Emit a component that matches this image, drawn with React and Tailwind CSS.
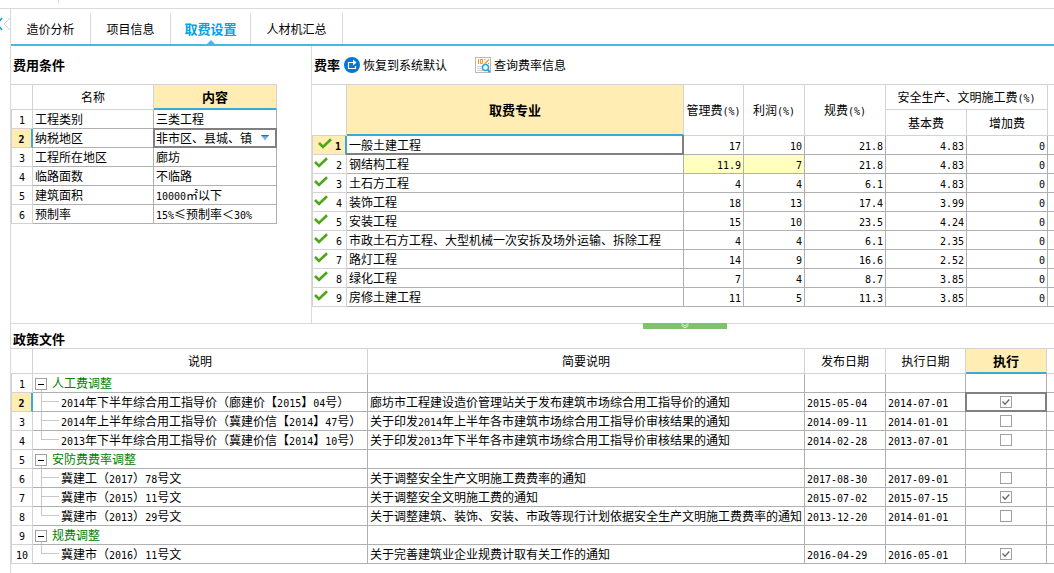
import { Fragment, useState } from 'react';
import clsx from 'clsx';

const tabs = ['造价分析', '项目信息', '取费设置', '人材机汇总'];

const conditions = [
  { name: '工程类别', value: '三类工程' },
  {
    name: '纳税地区',
    value: '非市区、县城、镇',
    options: ['市区', '县城、镇', '非市区、县城、镇'],
  },
  { name: '工程所在地区', value: '廊坊' },
  { name: '临路面数', value: '不临路' },
  { name: '建筑面积', value: '10000㎡以下' },
  { name: '预制率', value: '15%≤预制率＜30%' },
];

const rates = [
  { name: '一般土建工程', values: ['17', '10', '21.8', '4.83', '0'] },
  { name: '钢结构工程', values: ['11.9', '7', '21.8', '4.83', '0'], edited: true },
  { name: '土石方工程', values: ['4', '4', '6.1', '4.83', '0'] },
  { name: '装饰工程', values: ['18', '13', '17.4', '3.99', '0'] },
  { name: '安装工程', values: ['15', '10', '23.5', '4.24', '0'] },
  {
    name: '市政土石方工程、大型机械一次安拆及场外运输、拆除工程',
    values: ['4', '4', '6.1', '2.35', '0'],
  },
  { name: '路灯工程', values: ['14', '9', '16.6', '2.52', '0'] },
  { name: '绿化工程', values: ['7', '4', '8.7', '3.85', '0'] },
  { name: '房修土建工程', values: ['11', '5', '11.3', '3.85', '0'] },
];

const policies = [
  { group: '人工费调整' },
  {
    name: '2014年下半年综合用工指导价（廊建价【2015】04号）',
    desc: '廊坊市工程建设造价管理站关于发布建筑市场综合用工指导价的通知',
    issued: '2015-05-04',
    effective: '2014-07-01',
    applied: true,
  },
  {
    name: '2014年上半年综合用工指导价（冀建价信【2014】47号）',
    desc: '关于印发2014年上半年各市建筑市场综合用工指导价审核结果的通知',
    issued: '2014-09-11',
    effective: '2014-01-01',
  },
  {
    name: '2013年下半年综合用工指导价（冀建价信【2014】10号）',
    desc: '关于印发2013年下半年各市建筑市场综合用工指导价审核结果的通知',
    issued: '2014-02-28',
    effective: '2013-07-01',
    last: true,
  },
  { group: '安防费费率调整' },
  {
    name: '冀建工（2017）78号文',
    desc: '关于调整安全生产文明施工费费率的通知',
    issued: '2017-08-30',
    effective: '2017-09-01',
  },
  {
    name: '冀建市（2015）11号文',
    desc: '关于调整安全文明施工费的通知',
    issued: '2015-07-02',
    effective: '2015-07-15',
    applied: true,
  },
  {
    name: '冀建市（2013）29号文',
    desc: '关于调整建筑、装饰、安装、市政等现行计划依据安全生产文明施工费费率的通知',
    issued: '2013-12-20',
    effective: '2014-01-01',
    last: true,
  },
  { group: '规费调整' },
  {
    name: '冀建市（2016）11号文',
    desc: '关于完善建筑业企业规费计取有关工作的通知',
    issued: '2016-04-29',
    effective: '2016-05-01',
    applied: true,
    last: true,
  },
];

const headCell = 'h-[26px] border-t border-r border-b border-[#d3d3d3] p-0 font-normal';
const headSub = 'h-[26px] border-r border-b border-[#d3d3d3] p-0 font-normal';
const headActive =
  'h-[26px] border-t border-r border-b-2 border-[#d3d3d3] border-b-[#3ba9d6] bg-[#ffedb4] p-0 text-[13px] font-bold';
const cell = 'h-[19px] border-r border-b border-[#b0b0b0] px-0.5 py-0 whitespace-nowrap';
const tableBase = 'table-fixed border-separate border-spacing-0 leading-[18px]';

// half-width characters are set in a mono face so that two take one CJK cell
function Txt({ children }) {
  return children.split(/([\x20-\x7e]+)/).map((part, i) =>
    i % 2 ? (
      <span key={i} className="font-['DejaVu_Sans_Mono',monospace] text-[10px] leading-none">
        {part}
      </span>
    ) : (
      <Fragment key={i}>{part}</Fragment>
    )
  );
}

function IndexCell({ n, active, checked }) {
  return (
    <td
      className={clsx(
        'h-[19px] border-b border-l border-[#d3d3d3] p-0 text-center',
        active ? 'border-r-2 border-r-[#3ba9d6] bg-[#ffedb4] font-bold' : 'border-r'
      )}
    >
      {checked ? (
        <div className="flex h-[18px] items-end justify-between pr-1 pb-0.5 pl-px">
          <svg
            viewBox="0 0 14 11"
            className={clsx('mt-0.5 h-[11px] w-[14px] self-start', active && 'ml-1')}
            fill="none"
            stroke="#4ea716"
            strokeWidth="2.6"
          >
            <path d="M1 5 L5 9 L13 1.2" />
          </svg>
          <Txt>{String(n)}</Txt>
        </div>
      ) : (
        <Txt>{String(n)}</Txt>
      )}
    </td>
  );
}

function FocusFrame() {
  return <span className="pointer-events-none absolute -inset-px border-2 border-[#808080]" />;
}

function ConditionPanel() {
  const [region, setRegion] = useState('非市区、县城、镇');

  return (
    <section className="w-[301px] shrink-0 border-r border-[#d9d9d9]">
      <h2 className="flex h-[38px] items-center pl-0.5 text-[13px] font-bold">费用条件</h2>
      <table className={clsx(tableBase, 'w-[266px]')}>
        <colgroup>
          <col className="w-[22px]" />
          <col className="w-[121px]" />
          <col />
        </colgroup>
        <thead>
          <tr>
            <th className={headCell} />
            <th className={headCell}>名称</th>
            <th className={headActive}>内容</th>
          </tr>
        </thead>
        <tbody>
          {conditions.map((row, i) => (
            <tr key={row.name}>
              <IndexCell n={i + 1} active={i === 1} />
              <td className={cell}>{row.name}</td>
              {row.options ? (
                <td className={clsx(cell, 'relative')}>
                  <select
                    aria-label={row.name}
                    value={region}
                    onChange={(e) => setRegion(e.target.value)}
                    className="block h-[18px] w-full appearance-none bg-transparent p-0 leading-[18px] outline-none"
                  >
                    {row.options.map((o) => (
                      <option key={o}>{o}</option>
                    ))}
                  </select>
                  <svg
                    viewBox="0 0 10 6"
                    className="pointer-events-none absolute top-1.5 right-1.5 h-1.5 w-2.5"
                  >
                    <path d="M1 0 H9 L5 5.5 Z" fill="#6fb3e6" />
                    <path d="M1 0 H9 L8.2 1.2 H1.8 Z" fill="#2f6ea8" />
                  </svg>
                  <FocusFrame />
                </td>
              ) : (
                <td className={cell}>
                  <Txt>{row.value}</Txt>
                </td>
              )}
            </tr>
          ))}
        </tbody>
      </table>
    </section>
  );
}

function RatePanel() {
  return (
    <section className="min-w-0 flex-1">
      <div className="flex h-[38px] items-center pl-0.5">
        <h2 className="w-[30px] text-[13px] font-bold">费率</h2>
        <button type="button" className="flex items-center gap-[3px]">
          <svg viewBox="0 0 16 16" className="h-4 w-4">
            <circle cx="8" cy="8" r="8" fill="#0078d7" />
            <path
              d="M6.5 5.5 H4.5 V11.5 H11.5 V9 M5.5 5.5 H10"
              fill="none"
              stroke="#fff"
              strokeWidth="1.2"
            />
            <path d="M9 2.5 L12.5 5.5 L9 8.5 Z" fill="#fff" />
          </svg>
          恢复到系统默认
        </button>
        <button type="button" className="ml-7 flex items-center gap-[3px]">
          <svg viewBox="0 0 16 16" className="h-4 w-4">
            <rect x="0.5" y="0.5" width="15" height="15" fill="#fff" stroke="#b9b9b9" />
            <path d="M3.5 2 V7 M5.5 2.5 H7.5 V6.5 H5.5 Z" fill="none" stroke="#f59a00" />
            <path
              d="M9.5 7 L14 2.5 M9 2.5 H10.5 M12.8 6.3 H14.2"
              fill="none"
              stroke="#f59a00"
              strokeWidth="1.2"
            />
            <path d="M2 9.5 H7 M2 11.5 H6.5 M2 13.5 H8" stroke="#cfcfcf" />
            <circle cx="10.5" cy="10.5" r="3" fill="#fff" stroke="#2aa3dc" strokeWidth="1.5" />
            <path d="M12.5 12.5 L14.8 15" stroke="#2aa3dc" strokeWidth="2" />
          </svg>
          查询费率信息
        </button>
      </div>
      <table className={clsx(tableBase, 'w-full')}>
        <colgroup>
          <col className="w-[35px]" />
          <col />
          <col className="w-[60px]" />
          <col className="w-[61px]" />
          <col className="w-[81px]" />
          <col className="w-[81px]" />
          <col className="w-[81px]" />
          <col className="w-1.5" />
        </colgroup>
        <thead>
          <tr>
            <th rowSpan={2} className={headCell} />
            <th rowSpan={2} className={headActive}>
              取费专业
            </th>
            <th rowSpan={2} className={headCell}>
              <Txt>管理费(%)</Txt>
            </th>
            <th rowSpan={2} className={headCell}>
              <Txt>利润(%)</Txt>
            </th>
            <th rowSpan={2} className={headCell}>
              <Txt>规费(%)</Txt>
            </th>
            <th colSpan={2} className={headCell}>
              <Txt>安全生产、文明施工费(%)</Txt>
            </th>
            <th rowSpan={2} className="border-t border-b border-[#d3d3d3] p-0" />
          </tr>
          <tr>
            <th className={headSub}>基本费</th>
            <th className={headSub}>增加费</th>
          </tr>
        </thead>
        <tbody>
          {rates.map((row, i) => (
            <tr key={row.name}>
              <IndexCell n={i + 1} active={i === 0} checked />
              <td className={clsx(cell, i === 0 && 'relative')}>
                {row.name}
                {i === 0 && (
                  <span className="absolute -inset-px border-r-2 border-b-2 border-[#808080]" />
                )}
              </td>
              {row.values.map((v, k) => (
                <td
                  key={k}
                  className={clsx(cell, 'text-right', row.edited && k < 2 && 'bg-[#ffffbe]')}
                >
                  <Txt>{v}</Txt>
                </td>
              ))}
              <td className="border-b border-[#b0b0b0] p-0" />
            </tr>
          ))}
        </tbody>
      </table>
    </section>
  );
}

function GroupName({ children }) {
  return (
    <div className="flex h-[18px] text-[#008000]">
      <div className="flex w-[17px] flex-col pt-1">
        <button
          type="button"
          aria-label="折叠"
          className="flex h-3 w-3 shrink-0 items-center justify-center border border-[#a0a0a0]"
        >
          <span className="h-px w-1.5 bg-black" />
        </button>
        <span className="ml-1.5 flex-1 border-l border-[#c8c8c8]" />
      </div>
      {children}
    </div>
  );
}

function ChildName({ last, children }) {
  return (
    <div className="flex h-[18px] pl-1.5">
      <span className="mr-0.5 flex w-[18px] flex-col">
        <span className="h-[9px] border-b border-l border-[#c8c8c8]" />
        {!last && <span className="h-[9px] border-l border-[#c8c8c8]" />}
      </span>
      <span>
        <Txt>{children}</Txt>
      </span>
    </div>
  );
}

function ApplyBox({ label, defaultChecked }) {
  return (
    <label className="relative mx-auto block h-3 w-3">
      <input
        type="checkbox"
        aria-label={label}
        defaultChecked={defaultChecked}
        className="peer block h-3 w-3 appearance-none border border-[#a0a0a0] bg-white"
      />
      <svg
        viewBox="0 0 12 12"
        className="pointer-events-none absolute inset-0 hidden h-3 w-3 peer-checked:block"
        fill="none"
        stroke="#6b6b78"
        strokeWidth="1.4"
      >
        <path d="M2.5 5.5 L5 8.2 L9.3 3.5" />
      </svg>
    </label>
  );
}

function PolicyPanel() {
  return (
    <section>
      <h2 className="flex h-[19px] items-end pl-0.5 text-[13px] leading-[18px] font-bold">
        政策文件
      </h2>
      <table className={clsx(tableBase, 'w-full')}>
        <colgroup>
          <col className="w-[22px]" />
          <col className="w-[335px]" />
          <col />
          <col className="w-[81px]" />
          <col className="w-[80px]" />
          <col className="w-[81px]" />
          <col className="w-[7px]" />
        </colgroup>
        <thead>
          <tr>
            <th className={headCell} />
            <th className={headCell}>说明</th>
            <th className={headCell}>简要说明</th>
            <th className={headCell}>发布日期</th>
            <th className={headCell}>执行日期</th>
            <th className={headActive}>执行</th>
            <th className="border-t border-b border-[#d3d3d3] p-0" />
          </tr>
        </thead>
        <tbody>
          {policies.map((row, i) => (
            <tr key={i}>
              <IndexCell n={i + 1} active={i === 1} />
              <td className={cell}>
                {row.group ? (
                  <GroupName>{row.group}</GroupName>
                ) : (
                  <ChildName last={row.last}>{row.name}</ChildName>
                )}
              </td>
              <td className={cell}>
                <Txt>{row.desc || ''}</Txt>
              </td>
              <td className={cell}>
                <Txt>{row.issued || ''}</Txt>
              </td>
              <td className={cell}>
                <Txt>{row.effective || ''}</Txt>
              </td>
              <td className={clsx(cell, i === 1 && 'relative')}>
                {!row.group && <ApplyBox label={row.name} defaultChecked={row.applied} />}
                {i === 1 && <FocusFrame />}
              </td>
              <td className="border-b border-[#b0b0b0] p-0" />
            </tr>
          ))}
        </tbody>
      </table>
    </section>
  );
}

export default function App() {
  const [tab, setTab] = useState('取费设置');

  return (
    <div className="flex min-h-screen flex-col bg-white font-['Noto_Sans_CJK_SC',sans-serif] text-xs text-black">
      <div className="h-[9px] border-b border-[#d9d9d9]">
        <div className="ml-[58px] h-[3px] w-px bg-[#d9d9d9]" />
      </div>
      <div className="flex flex-1">
        <div className="w-2.5 shrink-0 pt-2">
          <svg viewBox="0 0 10 14" className="h-[14px] w-2.5" fill="none">
            <path d="M2 1 L-3 7 L2 13" stroke="#1e9fc0" strokeWidth="1.6" />
            <path d="M10 1 L4 7 L10 13" stroke="#d0d0d0" />
          </svg>
        </div>
        <main className="min-w-0 flex-1 border-l border-[#d9d9d9]">
          <nav className="flex border-b-2 border-[#46b8e3] pt-1">
            {tabs.map((t) => (
              <button
                key={t}
                type="button"
                onClick={() => setTab(t)}
                className={clsx(
                  'relative h-[31px] border-r border-[#d9d9d9]',
                  t.length > 4 ? 'w-[92px]' : 'w-20',
                  t === tab && 'text-[13px] font-bold text-[#00a2e8]'
                )}
              >
                {t}
                {t === tab && (
                  <svg
                    viewBox="0 0 8 4"
                    className="absolute bottom-0 left-1/2 h-1 w-2 -translate-x-1/2"
                  >
                    <path d="M0 4 L4 0 L8 4 Z" fill="#46b8e3" />
                  </svg>
                )}
              </button>
            ))}
          </nav>
          <div className="flex">
            <ConditionPanel />
            <div className="min-w-0 flex-1 pb-4">
              <RatePanel />
            </div>
          </div>
          <div className="flex h-1.5 justify-center border-t border-[#d9d9d9] pl-[304px]">
            <button
              type="button"
              aria-label="收起"
              className="-mt-px flex h-1.5 w-[84px] justify-center bg-[#7fc269]"
            >
              <svg viewBox="0 0 8 6" className="h-1.5 w-2" fill="none" stroke="#e6f5df">
                <path d="M0.5 0.5 L4 3 L7.5 0.5 M0.5 2.5 L4 5 L7.5 2.5" />
              </svg>
            </button>
          </div>
          <PolicyPanel />
        </main>
      </div>
    </div>
  );
}
